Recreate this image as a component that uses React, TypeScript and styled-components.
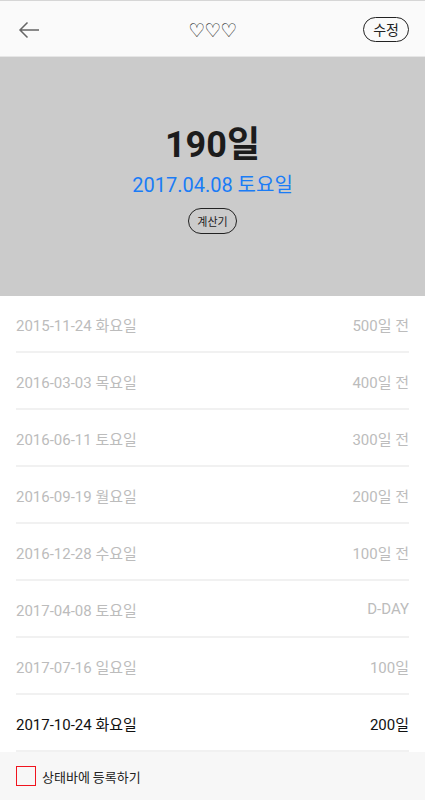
import React from "react";
import styled, { createGlobalStyle } from "styled-components";

const Global = createGlobalStyle`
  html, body { margin: 0; padding: 0; background: #ffffff; }
  body { font-family: Roboto, "Noto Sans CJK KR", sans-serif; }
`;

const Page = styled.div`
  width: 425px;
  height: 800px;
  display: flex;
  flex-direction: column;
  overflow: hidden;
  background: #ffffff;
`;

const Header = styled.header`
  height: 57px;
  flex: none;
  display: grid;
  grid-template-columns: 1fr auto 1fr;
  align-items: center;
  padding: 0 16px 0 16px;
  background: #fafafa;
  border-top: 1px solid #d6d6d6;
  border-bottom: 1px solid #e6e6e6;
  box-sizing: border-box;
`;

const BackButton = styled.div`
  display: flex;
  align-items: center;
  justify-self: start;
  padding-left: 2px;
  padding-top: 2px;
`;

const Hearts = styled.div`
  font-size: 19px;
  letter-spacing: -1px;
  color: #222;
  padding-top: 2px;
  font-family: "DejaVu Sans", sans-serif;
`;

const PillButton = styled.div<{ $small?: boolean }>`
  justify-self: end;
  border: 1px solid #222;
  border-radius: 14px;
  padding: ${(p) => (p.$small ? "5px 8px" : "4px 9px")};
  font-size: ${(p) => (p.$small ? 11 : 14)}px;
  line-height: ${(p) => (p.$small ? 14 : 15)}px;
  color: #222;
  margin-top: ${(p) => (p.$small ? 0 : 1)}px;
  font-family: "Noto Sans CJK KR", sans-serif;
`;

const Hero = styled.section`
  height: 239px;
  flex: none;
  background: #cbcbcb;
  display: flex;
  flex-direction: column;
  align-items: center;
  padding-top: 64px;
  box-sizing: border-box;
`;

const DayCount = styled.div`
  font-size: 36px;
  font-weight: 700;
  color: #1c1c1c;
  line-height: 48px;
  font-family: Roboto, "Noto Sans CJK KR", sans-serif;
`;

const TargetDate = styled.div`
  font-size: 20px;
  color: #1a7cf6;
  line-height: 28px;
  margin-top: 2px;
  margin-bottom: 9px;
`;

const List = styled.div`
  flex: 1;
  display: flex;
  flex-direction: column;
`;

const Row = styled.div<{ $past: boolean }>`
  height: 57px;
  flex: none;
  margin: 0 16px;
  display: flex;
  align-items: center;
  justify-content: space-between;
  border-bottom: 2px solid #f1f1f1;
  box-sizing: border-box;
  padding-top: 1px;
  font-size: 15px;
  color: ${(p) => (p.$past ? "#bcbcbc" : "#111111")};
`;

const Footer = styled.footer`
  height: 48px;
  flex: none;
  background: #f7f7f7;
  display: flex;
  align-items: center;
  padding: 0 16px;
  gap: 6px;
`;

const CheckBox = styled.div`
  width: 18px;
  height: 18px;
  border: 1px solid #f0141e;
  box-sizing: content-box;
`;

const FooterLabel = styled.span`
  font-size: 13px;
  color: #222;
  font-family: "Noto Sans CJK KR", sans-serif;
`;

const rows = [
  ["2015-11-24 화요일", "500일 전", true],
  ["2016-03-03 목요일", "400일 전", true],
  ["2016-06-11 토요일", "300일 전", true],
  ["2016-09-19 월요일", "200일 전", true],
  ["2016-12-28 수요일", "100일 전", true],
  ["2017-04-08 토요일", "D-DAY", true],
  ["2017-07-16 일요일", "100일", true],
  ["2017-10-24 화요일", "200일", false],
] as const;

export default function App() {
  return (
    <Page>
      <Global />
      <Header>
        <BackButton>
          <svg width="22" height="18" viewBox="0 0 22 18" fill="none" stroke="#666" strokeWidth="1.5">
            <path d="M21 9H2M9.5 1.5L2 9l7.5 7.5" />
          </svg>
        </BackButton>
        <Hearts>♡♡♡</Hearts>
        <PillButton>수정</PillButton>
      </Header>
      <Hero>
        <DayCount>190일</DayCount>
        <TargetDate>2017.04.08 토요일</TargetDate>
        <PillButton $small>계산기</PillButton>
      </Hero>
      <List>
        {rows.map(([d, v, past]) => (
          <Row key={d} $past={past}>
            <span>{d}</span>
            <span>{v}</span>
          </Row>
        ))}
      </List>
      <Footer>
        <CheckBox />
        <FooterLabel>상태바에 등록하기</FooterLabel>
      </Footer>
    </Page>
  );
}
